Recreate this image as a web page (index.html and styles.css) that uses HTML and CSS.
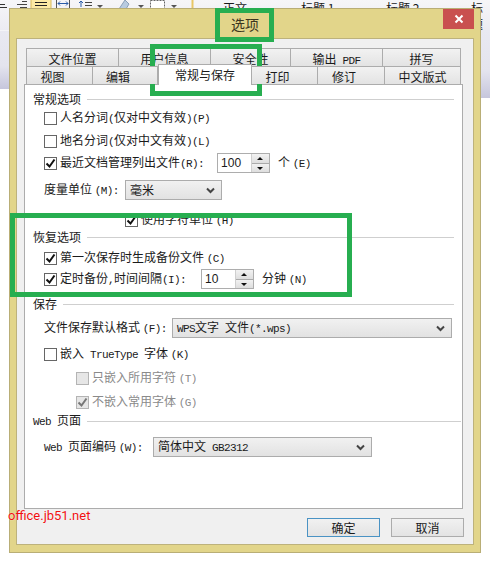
FILE: index.html
```html
<html>

<head>
	<title>选项</title>
	<link rel="stylesheet" href="styles.css">
</head>
<body>
	<div class="screen">
		<div class="ribbon">
			<svg class="tools" width="200" height="9" viewBox="0 0 200 9">
				<path d="M0 4.500h5M0 7.500h7" stroke="#333"/>
				<path d="M22 1.500h5M17 4.500h10M20 7.500h7" stroke="#444"/>
				<rect x="31" y="-3" width="20" height="13" fill="#fbe9a4" stroke="#d8b95c"/>
				<path d="M35 2.500h12M35 5.500h12M35 8.500h12" stroke="#222"/>
				<path d="M56.500 0v9M69.500 0v9" stroke="#555"/>
				<path d="M58 3.500h10M60 1.500l-2 2 2 2M66 1.500l2 2-2 2" stroke="#2a5ca8" fill="none"/>
				<path d="M81 7V1M79 3l2-2 2 2" stroke="#2a5ca8" fill="none"/>
				<path d="M85 2.500h7M85 5.500h7M85 8.500h7" stroke="#444"/>
				<path d="M97 5h6l-3 3z" fill="#555"/>
				<path d="M125 0l4 4-3 5h-7z" fill="#b8cbe0" stroke="#8aa0b8"/>
				<path d="M138 5h6l-3 3z" fill="#555"/>
				<rect x="150.500" y="0.500" width="14" height="9" fill="#fff" stroke="#666" stroke-dasharray="2 1"/>
				<path d="M171 5h6l-3 3z" fill="#555"/>
				<path d="M192.500 0v9" stroke="#e8c766" stroke-width="2"/>
			</svg>
			<span class="style-name style-first">正文</span>
			<span class="style-name style-one">标题 1</span>
			<span class="style-name style-two">标题 2</span>
			<span class="style-name style-three">标题</span>
		</div>
		<div class="side side-left"></div>
		<div class="side side-right"></div>

		<div class="dialog">
			<div class="titlebar">
				<span>选项</span>
				<div class="close">
					<svg width="10" height="10" viewBox="0 0 10 10"><path d="M1.500 1.500l7 7M8.500 1.500l-7 7" stroke="#fff" stroke-width="2"/></svg>
				</div>
			</div>
			<div class="client">
				<div class="tabs tabs-back">
					<div class="tab">文件位置</div>
					<div class="tab">用户信息</div>
					<div class="tab">安全性</div>
					<div class="tab">输出<span class="en"> PDF</span></div>
					<div class="tab">拼写</div>
				</div>
				<div class="tabs tabs-front">
					<div class="tab tab-short">视图</div>
					<div class="tab tab-short">编辑</div>
					<div class="tab tab-active">常规与保存</div>
					<div class="tab tab-short">打印</div>
					<div class="tab tab-short">修订</div>
					<div class="tab">中文版式</div>
				</div>
				<div class="panel">
					<div class="heading"><span>常规选项</span><i></i></div>
					<div class="row">
						<span class="check"></span>
						<span>人名分词<span class="en">(</span>仅对中文有效<span class="en">)(P)</span></span>
					</div>
					<div class="row mt1">
						<span class="check"></span>
						<span>地名分词<span class="en">(</span>仅对中文有效<span class="en">)(L)</span></span>
					</div>
					<div class="row">
						<span class="check on"><svg width="11" height="11" viewBox="0 0 11 11"><path d="M1.500 5.500l3 3 5-7" fill="none" stroke="#111" stroke-width="2"/></svg></span>
						<span>最近文档管理列出文件<span class="en">(R):</span></span>
						<div class="spin spin-recent">
							<span class="spin-value">100</span>
							<div class="spin-btns"><b class="up"></b><b class="down"></b></div>
						</div>
						<span class="after-spin">个 <span class="en">(E)</span></span>
					</div>
					<div class="row mt5">
						<span class="label label-unit">度量单位 <span class="en">(M):</span></span>
						<div class="combo combo-unit">
							<span>毫米</span>
							<svg width="9" height="7" viewBox="0 0 9 7"><path d="M1 1.500l3.500 3.500 3.500-3.500" fill="none" stroke="#444" stroke-width="2"/></svg>
						</div>
					</div>
					<div class="row row-nested mt8">
						<span class="check on"><svg width="11" height="11" viewBox="0 0 11 11"><path d="M1.500 5.500l3 3 5-7" fill="none" stroke="#111" stroke-width="2"/></svg></span>
						<span>使用字符单位 <span class="en">(H)</span></span>
					</div>

					<div class="heading mtm2"><span>恢复选项</span><i></i></div>
					<div class="row mt2">
						<span class="check on"><svg width="11" height="11" viewBox="0 0 11 11"><path d="M1.500 5.500l3 3 5-7" fill="none" stroke="#111" stroke-width="2"/></svg></span>
						<span>第一次保存时生成备份文件 <span class="en">(C)</span></span>
					</div>
					<div class="row mtm1">
						<span class="check on"><svg width="11" height="11" viewBox="0 0 11 11"><path d="M1.500 5.500l3 3 5-7" fill="none" stroke="#111" stroke-width="2"/></svg></span>
						<span>定时备份<span class="en">,</span>时间间隔<span class="en">(I):</span></span>
						<div class="spin spin-timer">
							<span class="spin-value">10</span>
							<div class="spin-btns"><b class="up"></b><b class="down"></b></div>
						</div>
						<span class="after-spin">分钟 <span class="en">(N)</span></span>
					</div>

					<div class="heading mt6"><span>保存</span><i></i></div>
					<div class="row mt5">
						<span class="label label-format">文件保存默认格式 <span class="en">(F):</span></span>
						<div class="combo combo-format">
							<span><span class="en">WPS</span>文字<span class="en"> </span>文件<span class="en">(*.wps)</span></span>
							<svg width="9" height="7" viewBox="0 0 9 7"><path d="M1 1.500l3.500 3.500 3.500-3.500" fill="none" stroke="#444" stroke-width="2"/></svg>
						</div>
					</div>
					<div class="row mt4">
						<span class="check"></span>
						<span>嵌入<span class="en"> TrueType </span>字体 <span class="en">(K)</span></span>
					</div>
					<div class="row row-sub mt2 disabled">
						<span class="check"></span>
						<span>只嵌入所用字符 <span class="en">(T)</span></span>
					</div>
					<div class="row row-sub mt2 disabled">
						<span class="check on"><svg width="11" height="11" viewBox="0 0 11 11"><path d="M1.500 5.500l3 3 5-7" fill="none" stroke="#777" stroke-width="2"/></svg></span>
						<span>不嵌入常用字体 <span class="en">(G)</span></span>
					</div>

					<div class="heading heading-wide"><span><span class="en">Web </span>页面</span><i></i></div>
					<div class="row mt7">
						<span class="label label-web"><span class="en">Web </span>页面编码 <span class="en">(W):</span></span>
						<div class="combo combo-web">
							<span>简体中文<span class="en"> GB2312</span></span>
							<svg width="9" height="7" viewBox="0 0 9 7"><path d="M1 1.500l3.500 3.500 3.500-3.500" fill="none" stroke="#444" stroke-width="2"/></svg>
						</div>
					</div>
				</div>
				<div class="actions">
					<div class="btn btn-default">确定</div>
					<div class="btn">取消</div>
				</div>
			</div>
		</div>

		<div class="mark mark-title"></div>
		<div class="mark mark-tab"></div>
		<div class="mark mark-recover"></div>
		<div class="watermark">office.jb51.net</div>
	</div>
</body>

</html>
```

FILE: styles.css
```css
html, body { margin: 0; padding: 0; background: #fff; }
body { font-family: "Noto Sans CJK SC", "Liberation Sans", sans-serif; font-size: 12px; color: #1a1a1a; }
.en { font-family: "Liberation Mono", monospace; font-size: 11px; letter-spacing: -0.6px; white-space: pre; }

.screen { position: relative; width: 490px; height: 562px; overflow: hidden; }

/* what is left of the document window behind the dialog */
.ribbon { position: relative; height: 30px; background: linear-gradient(#f6f6f8, #ecebf2); }
.tools { position: absolute; left: 0; top: 0; }
.style-name { position: absolute; top: 0; line-height: 16px; }
.style-first { left: 223px; }
.style-one { left: 301px; }
.style-two { left: 386px; }
.style-three { left: 471px; }
.side { position: absolute; width: 9px; }
.side-left { left: 0; top: 30px; height: 58px; background: linear-gradient(#e9e9f2 0, #e4e4ee 60%, #c6c6dc 100%); border-top: 1px solid #f4f4f8; }
.side-right { right: 0; top: 30px; height: 68px; background: linear-gradient(#e9e9f2 0, #e4e4ee 60%, #c6c6dc 100%); }

/* dialog */
.dialog { position: absolute; left: 9px; top: 8px; width: 472px; height: 545px; box-sizing: border-box; background: #e2d58a; border: 1px solid #b9ae76; display: flex; flex-direction: column; }
.titlebar { position: relative; height: 29px; display: flex; align-items: center; justify-content: center; font-size: 14px; color: #3a3520; flex: none; }
.close { position: absolute; right: 6px; top: 0; width: 31px; height: 20px; background: #c9504f; display: flex; align-items: center; justify-content: center; }
.client { margin: 0 6px 7px; flex: 1; background: #f0f0f0; border: 1px solid #bdb27c; padding: 9px 10px 0 7px; display: flex; flex-direction: column; }

/* tabs */
.tabs { display: grid; margin-left: 2px; height: 18px; width: 435px; }
.tabs-back { grid-template-columns: 93px 92px 80px 92px 78px; }
.tabs-front { grid-template-columns: 67px 65px 94px 66px 67px 76px; position: relative; z-index: 1; }
.tab { box-sizing: border-box; height: 18px; line-height: 19px; text-align: center; background: linear-gradient(#f2f2f2, #e3e3e3); border: 1px solid #acacac; border-width: 1px 1px 0 0; }
.tab:first-child { border-left-width: 1px; }
.tab-short { padding-right: 14px; }
.tab-active { height: 21px; margin-top: -2px; background: #fff; border-left: 1px solid #acacac; line-height: 20px; position: relative; }

.panel { box-sizing: border-box; height: 425px; background: #fff; border: 1px solid #acacac; padding-top: 6px; }
.heading { height: 16px; margin: 0 8px; display: flex; align-items: center; gap: 6px; line-height: 16px; }
.heading i { flex: 1; height: 1px; background: #cfcfcf; }
.heading-wide { margin-right: 1px; }
.row { height: 22px; display: flex; align-items: center; padding-left: 19px; line-height: 22px; white-space: nowrap; }
.row-nested { padding-left: 100px; }
.row-sub { padding-left: 51px; }
.mt1 { margin-top: 1px; }
.mt2 { margin-top: 2px; }
.mt4 { margin-top: 4px; }
.mt5 { margin-top: 5px; }
.mt6 { margin-top: 6px; }
.mt7 { margin-top: 7px; }
.mt8 { margin-top: 8px; }
.mtm1 { margin-top: -1px; }
.mtm2 { margin-top: -2px; }

.check { box-sizing: border-box; width: 13px; height: 13px; margin-right: 3px; border: 1px solid #666; background: #fff; flex: none; display: flex; }
.disabled { color: #8a8a8a; }
.disabled .check { border-color: #b4b4b4; background: #e6e6e6; }

.spin { box-sizing: border-box; width: 53px; height: 20px; border: 1px solid #adadad; display: flex; background: #fff; }
.spin-recent { margin-left: 13px; }
.spin-timer { margin-left: 15px; }
.spin-value { flex: 1; padding-left: 3px; line-height: 18px; font-family: "Liberation Sans", sans-serif; }
.spin-btns { width: 17px; display: flex; flex-direction: column; gap: 1px; background: #aaa; border-left: 1px solid #cfcfcf; }
.spin-btns b { flex: 1; background: linear-gradient(#f2f2f2, #dedede); position: relative; }
.spin-btns b:after { content: ""; position: absolute; left: 5px; top: 3px; border: 3px solid transparent; border-top: 0; border-bottom: 3px solid #111; }
.spin-btns b.down:after { border-bottom: 0; border-top: 3px solid #111; }
.after-spin { margin-left: 8px; }

.label { flex: none; }
.label-unit { width: 81px; }
.label-format { width: 128px; }
.label-web { width: 109px; }
.combo { box-sizing: border-box; height: 20px; padding: 0 6px 0 4px; border: 1px solid #acacac; background: linear-gradient(#f1f1f1, #e2e2e2); display: flex; align-items: center; justify-content: space-between; line-height: 18px; }
.combo-unit { width: 97px; }
.combo-format { width: 280px; }
.combo-web { width: 219px; }

.actions { display: flex; justify-content: flex-end; gap: 11px; margin: 9px -1px 0 0; }
.btn { box-sizing: border-box; width: 73px; height: 19px; text-align: center; line-height: 17px; border: 1px solid #acacac; background: linear-gradient(#f1f1f1, #e3e3e3); }
.btn-default { border-color: #4a93c4; }

/* green marks drawn over the screenshot */
.mark { position: absolute; box-sizing: border-box; border: 5px solid #27ae50; }
.mark-title { left: 215px; top: 8px; width: 59px; height: 34px; }
.mark-tab { left: 150px; top: 44px; width: 112px; height: 52px; }
.mark-recover { left: 10px; top: 213px; width: 342px; height: 84px; }

.watermark { position: absolute; left: 8px; top: 508px; font-family: "Roboto", sans-serif; font-size: 13px; line-height: 16px; color: #f01010; text-shadow: 0 0 1px #fff; }
```
